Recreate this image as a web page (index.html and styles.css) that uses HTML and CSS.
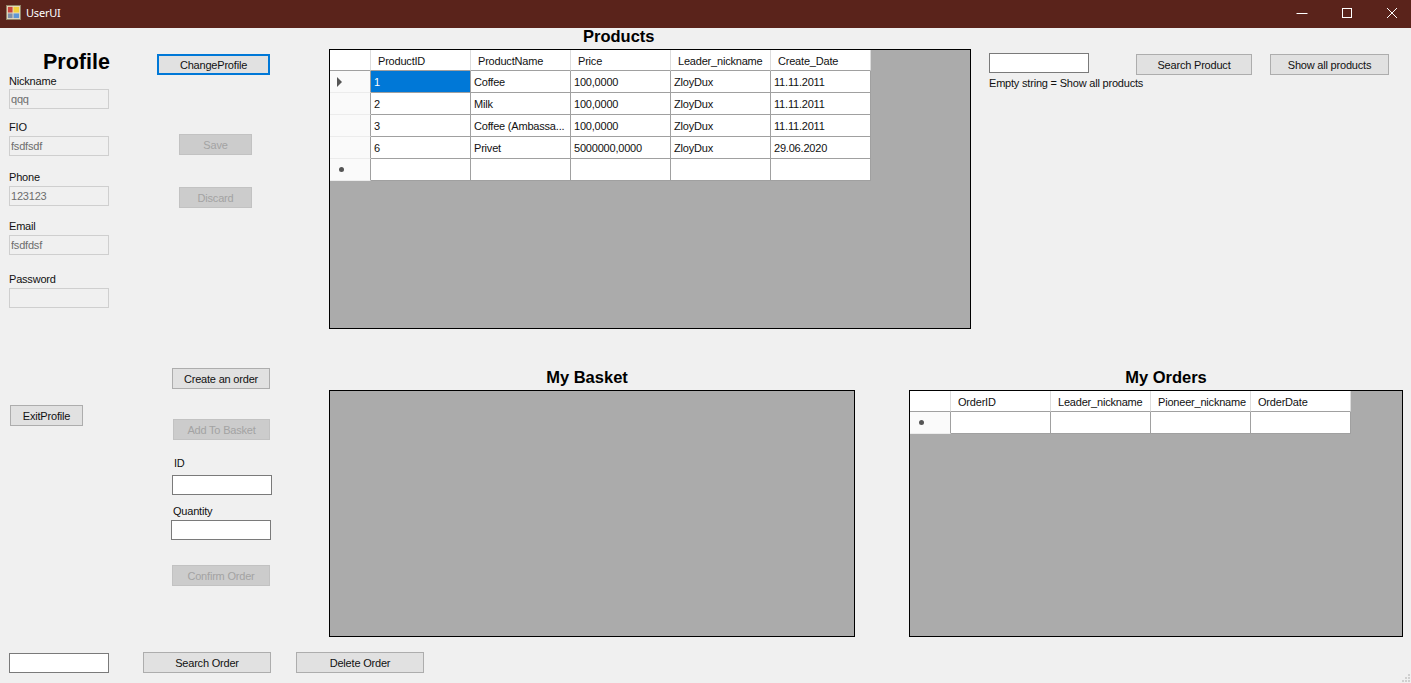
FILE: index.html
```html
<!DOCTYPE html>
<html>
  <head>
    <title>UserUI</title>
    <link rel="stylesheet" href="styles.css">
  </head>
  <body>
    <div class="titlebar">
      <svg class="app-icon" viewBox="0 0 16 16">
        <rect x="0.5" y="0.5" width="15" height="15" fill="#e8dcc0" stroke="#8f8468" />
        <rect x="2" y="2" width="5" height="6" fill="#c8443c" />
        <rect x="8" y="2" width="6" height="6" fill="#f2cf3a" />
        <rect x="2" y="9" width="5" height="5" fill="#7f8fa8" />
        <rect x="8" y="9" width="6" height="5" fill="#5f97d6" />
      </svg>
      <span class="title">UserUI</span>
      <div class="win-controls">
        <svg viewBox="0 0 12 12"><path d="M0.5 6.5H11.5" stroke="#fff" fill="none" /></svg>
        <svg viewBox="0 0 12 12"><rect x="1.5" y="1.5" width="9" height="9" stroke="#fff" fill="none" /></svg>
        <svg viewBox="0 0 12 12"><path d="M1 1L11 11M11 1L1 11" stroke="#fff" fill="none" /></svg>
      </div>
    </div>

    <div class="panels">
      <div class="profile">
        <h1>Profile</h1>
        <div class="field field-nick">
          <label>Nickname</label>
          <input type="text" value="qqq" disabled />
        </div>
        <div class="field field-fio">
          <label>FIO</label>
          <input type="text" value="fsdfsdf" disabled />
        </div>
        <div class="field field-phone">
          <label>Phone</label>
          <input type="text" value="123123" disabled />
        </div>
        <div class="field field-email">
          <label>Email</label>
          <input type="text" value="fsdfdsf" disabled />
        </div>
        <div class="field field-password">
          <label>Password</label>
          <input type="text" disabled />
        </div>
        <button type="button" class="btn-exit">ExitProfile</button>
      </div>

      <div class="actions">
        <button type="button" class="btn-change">ChangeProfile</button>
        <button type="button" class="btn-save" disabled>Save</button>
        <button type="button" class="btn-discard" disabled>Discard</button>
        <button type="button" class="btn-create">Create an order</button>
        <button type="button" class="btn-add" disabled>Add To Basket</button>
        <label class="label-id">ID</label>
        <input type="text" class="input-id" />
        <label class="label-qty">Quantity</label>
        <input type="text" class="input-qty" />
        <button type="button" class="btn-confirm" disabled>Confirm Order</button>
      </div>

      <div class="tables">
        <div class="top-row">
          <div class="products">
            <h2 class="head-products">Products</h2>
            <div class="grid-box box-products">
              <table>
                <tr class="head-row">
                  <th class="row-head"></th>
                  <th>ProductID</th>
                  <th>ProductName</th>
                  <th>Price</th>
                  <th>Leader_nickname</th>
                  <th>Create_Date</th>
                </tr>
                <tr>
                  <td class="row-head"><span class="arrow"></span></td>
                  <td class="selected">1</td>
                  <td>Coffee</td>
                  <td>100,0000</td>
                  <td>ZloyDux</td>
                  <td>11.11.2011</td>
                </tr>
                <tr>
                  <td class="row-head"></td>
                  <td>2</td>
                  <td>Milk</td>
                  <td>100,0000</td>
                  <td>ZloyDux</td>
                  <td>11.11.2011</td>
                </tr>
                <tr>
                  <td class="row-head"></td>
                  <td>3</td>
                  <td>Coffee (Ambassa...</td>
                  <td>100,0000</td>
                  <td>ZloyDux</td>
                  <td>11.11.2011</td>
                </tr>
                <tr>
                  <td class="row-head"></td>
                  <td>6</td>
                  <td>Privet</td>
                  <td>5000000,0000</td>
                  <td>ZloyDux</td>
                  <td>29.06.2020</td>
                </tr>
                <tr>
                  <td class="row-head"><span class="star"></span></td>
                  <td></td>
                  <td></td>
                  <td></td>
                  <td></td>
                  <td></td>
                </tr>
              </table>
            </div>
          </div>

          <div class="search-products">
            <div class="search-left">
              <input type="text" />
              <span class="hint">Empty string = Show all products</span>
            </div>
            <button type="button" class="btn-search-product">Search Product</button>
            <button type="button" class="btn-show-all">Show all products</button>
          </div>
        </div>

        <div class="bottom-row">
          <div class="basket">
            <h2 class="head-basket">My Basket</h2>
            <div class="grid-box box-lower"></div>
          </div>
          <div class="orders">
            <h2 class="head-orders">My Orders</h2>
            <div class="grid-box box-lower">
              <table>
                <tr class="head-row">
                  <th class="row-head"></th>
                  <th>OrderID</th>
                  <th>Leader_nickname</th>
                  <th>Pioneer_nickname</th>
                  <th>OrderDate</th>
                </tr>
                <tr>
                  <td class="row-head"><span class="star"></span></td>
                  <td></td>
                  <td></td>
                  <td></td>
                  <td></td>
                </tr>
              </table>
            </div>
          </div>
        </div>
      </div>
    </div>

    <div class="order-bar">
      <input type="text" />
      <button type="button" class="btn-search-order">Search Order</button>
      <button type="button" class="btn-delete-order">Delete Order</button>
    </div>

    <svg class="grip" viewBox="0 0 12 12">
      <rect x="9" y="3" width="2" height="2" fill="#d0d0d0" />
      <rect x="6" y="6" width="2" height="2" fill="#d0d0d0" />
      <rect x="9" y="6" width="2" height="2" fill="#d0d0d0" />
      <rect x="3" y="9" width="2" height="2" fill="#d0d0d0" />
      <rect x="6" y="9" width="2" height="2" fill="#d0d0d0" />
      <rect x="9" y="9" width="2" height="2" fill="#d0d0d0" />
    </svg>
  </body>
</html>
```

FILE: styles.css
```css
* {
  box-sizing: border-box;
}

body {
  margin: 0;
  width: 1411px;
  height: 683px;
  overflow: hidden;
  background-color: #f0f0f0;
  font-family: "Liberation Sans", Arial, sans-serif;
  font-size: 11px;
  letter-spacing: -0.2px;
  color: #111;
}

/* title bar */
.titlebar {
  display: flex;
  align-items: center;
  height: 28px;
  padding: 0 13px 3px 6px;
  background-color: #5a231b;
  color: white;
}

.app-icon {
  width: 15px;
  height: 15px;
}

.title {
  margin-left: 5px;
  font-family: "Noto Sans", sans-serif;
  font-size: 11px;
}

.win-controls {
  display: flex;
  gap: 33px;
  margin-left: auto;
}

.win-controls svg {
  width: 12px;
  height: 12px;
}

/* controls */
label {
  display: block;
  height: 14px;
  line-height: 14px;
}

input {
  display: block;
  width: 100px;
  height: 20px;
  padding: 0 1px;
  border: 1px solid #7a7a7a;
  background-color: white;
  font-family: inherit;
  font-size: 11px;
  letter-spacing: inherit;
}

input:disabled {
  border-color: #cfcfcf;
  background-color: #f0f0f0;
  color: #6d6d6d;
}

button {
  display: block;
  height: 21px;
  padding: 0;
  border: 1px solid #adadad;
  background-color: #e1e1e1;
  color: #111;
  font-family: inherit;
  font-size: 11px;
  letter-spacing: inherit;
}

button:disabled {
  border-color: #c2c2c2;
  background-color: #cccccc;
  color: #a3a3a3;
}

h1,
h2 {
  margin: 0;
  font-weight: bold;
  letter-spacing: 0;
  color: black;
}

h2 {
  height: 16px;
  margin: 0 0 5px;
  font-size: 16.5px;
  line-height: 16px;
}

/* columns */
.panels {
  display: grid;
  grid-template-columns: 148px 172px 1fr;
  height: 609px;
  padding-left: 9px;
}

.profile h1 {
  height: 24px;
  margin-top: 22px;
  padding-left: 34px;
  font-size: 21.5px;
  line-height: 25px;
  white-space: nowrap;
}

.field label {
  margin-bottom: 2px;
}

.field-nick label {
  margin-bottom: 1px;
}

.field-fio {
  margin-top: 11px;
}

.field-phone {
  margin-top: 14px;
}

.field-email {
  margin-top: 13px;
}

.field-password {
  margin-top: 17px;
}

.btn-exit {
  width: 73px;
  margin: 97px 0 0 1px;
}

.actions {
  display: flex;
  flex-direction: column;
  align-items: flex-start;
}

.btn-change {
  width: 113px;
  margin-top: 26px;
  border: 2px solid #0078d7;
}

.btn-save {
  width: 73px;
  margin: 59px 0 0 22px;
}

.btn-discard {
  width: 73px;
  margin: 32px 0 0 22px;
}

.btn-create {
  width: 98px;
  margin: 160px 0 0 15px;
}

.btn-add {
  width: 97px;
  margin: 30px 0 0 16px;
}

.label-id {
  margin: 16px 0 0 17px;
}

.input-id {
  margin: 5px 0 0 15px;
}

.label-qty {
  margin: 9px 0 0 16px;
}

.input-qty {
  margin: 2px 0 0 14px;
}

.btn-confirm {
  width: 98px;
  margin: 25px 0 0 15px;
}

/* grids */
.grid-box {
  border: 1px solid black;
  background-color: #ababab;
}

.box-products {
  width: 642px;
  height: 280px;
}

.box-lower {
  height: 247px;
}

table {
  border-collapse: separate;
  border-spacing: 0;
  table-layout: fixed;
  background-color: white;
}

th,
td {
  width: 100px;
  height: 22px;
  padding: 0 0 0 3px;
  border-right: 1px solid #a0a0a0;
  border-bottom: 1px solid #a0a0a0;
  font-weight: normal;
  font-size: 11px;
  text-align: left;
  white-space: nowrap;
  overflow: hidden;
}

th {
  height: 21px;
  padding: 2px 0 0 7px;
  border-right-color: #dcdcdc;
}

.row-head {
  width: 41px;
  padding: 0;
  border-bottom-color: #ececec;
  background-color: #fafafa;
}

th.row-head {
  border-bottom-color: #a0a0a0;
  background-color: white;
}

.selected {
  background-color: #0078d7;
  color: white;
}

.arrow {
  display: block;
  width: 0;
  height: 0;
  margin-left: 7px;
  border-top: 5px solid transparent;
  border-bottom: 5px solid transparent;
  border-left: 5px solid #555;
}

.star {
  display: block;
  width: 5px;
  height: 5px;
  margin-left: 9px;
  border-radius: 50%;
  background-color: #555;
}

/* upper and lower rows */
.top-row {
  display: flex;
}

.head-products {
  padding-left: 254px;
}

.search-products {
  display: flex;
  align-items: flex-start;
  margin-left: 18px;
}

.search-left {
  width: 100px;
  margin-top: 25px;
}

.hint {
  display: block;
  margin-top: 4px;
  line-height: 13px;
  white-space: nowrap;
}

.btn-search-product {
  flex: none;
  width: 116px;
  margin: 26px 0 0 47px;
}

.btn-show-all {
  flex: none;
  width: 119px;
  margin: 26px 0 0 18px;
}

.bottom-row {
  display: flex;
  gap: 54px;
  margin-top: 40px;
}

.basket {
  width: 526px;
}

.orders {
  width: 494px;
}

.head-basket,
.head-orders {
  text-align: center;
}

.head-basket {
  padding-right: 10px;
}

.head-orders {
  padding-left: 20px;
}

/* search and delete row at the bottom */
.order-bar {
  display: flex;
  align-items: flex-start;
  margin-top: 15px;
  padding-left: 9px;
}

.order-bar input {
  margin-top: 1px;
}

.btn-search-order {
  width: 128px;
  margin-left: 34px;
}

.btn-delete-order {
  width: 128px;
  margin-left: 25px;
}

.grip {
  position: absolute;
  right: 0;
  bottom: 0;
  width: 12px;
  height: 12px;
}
```
